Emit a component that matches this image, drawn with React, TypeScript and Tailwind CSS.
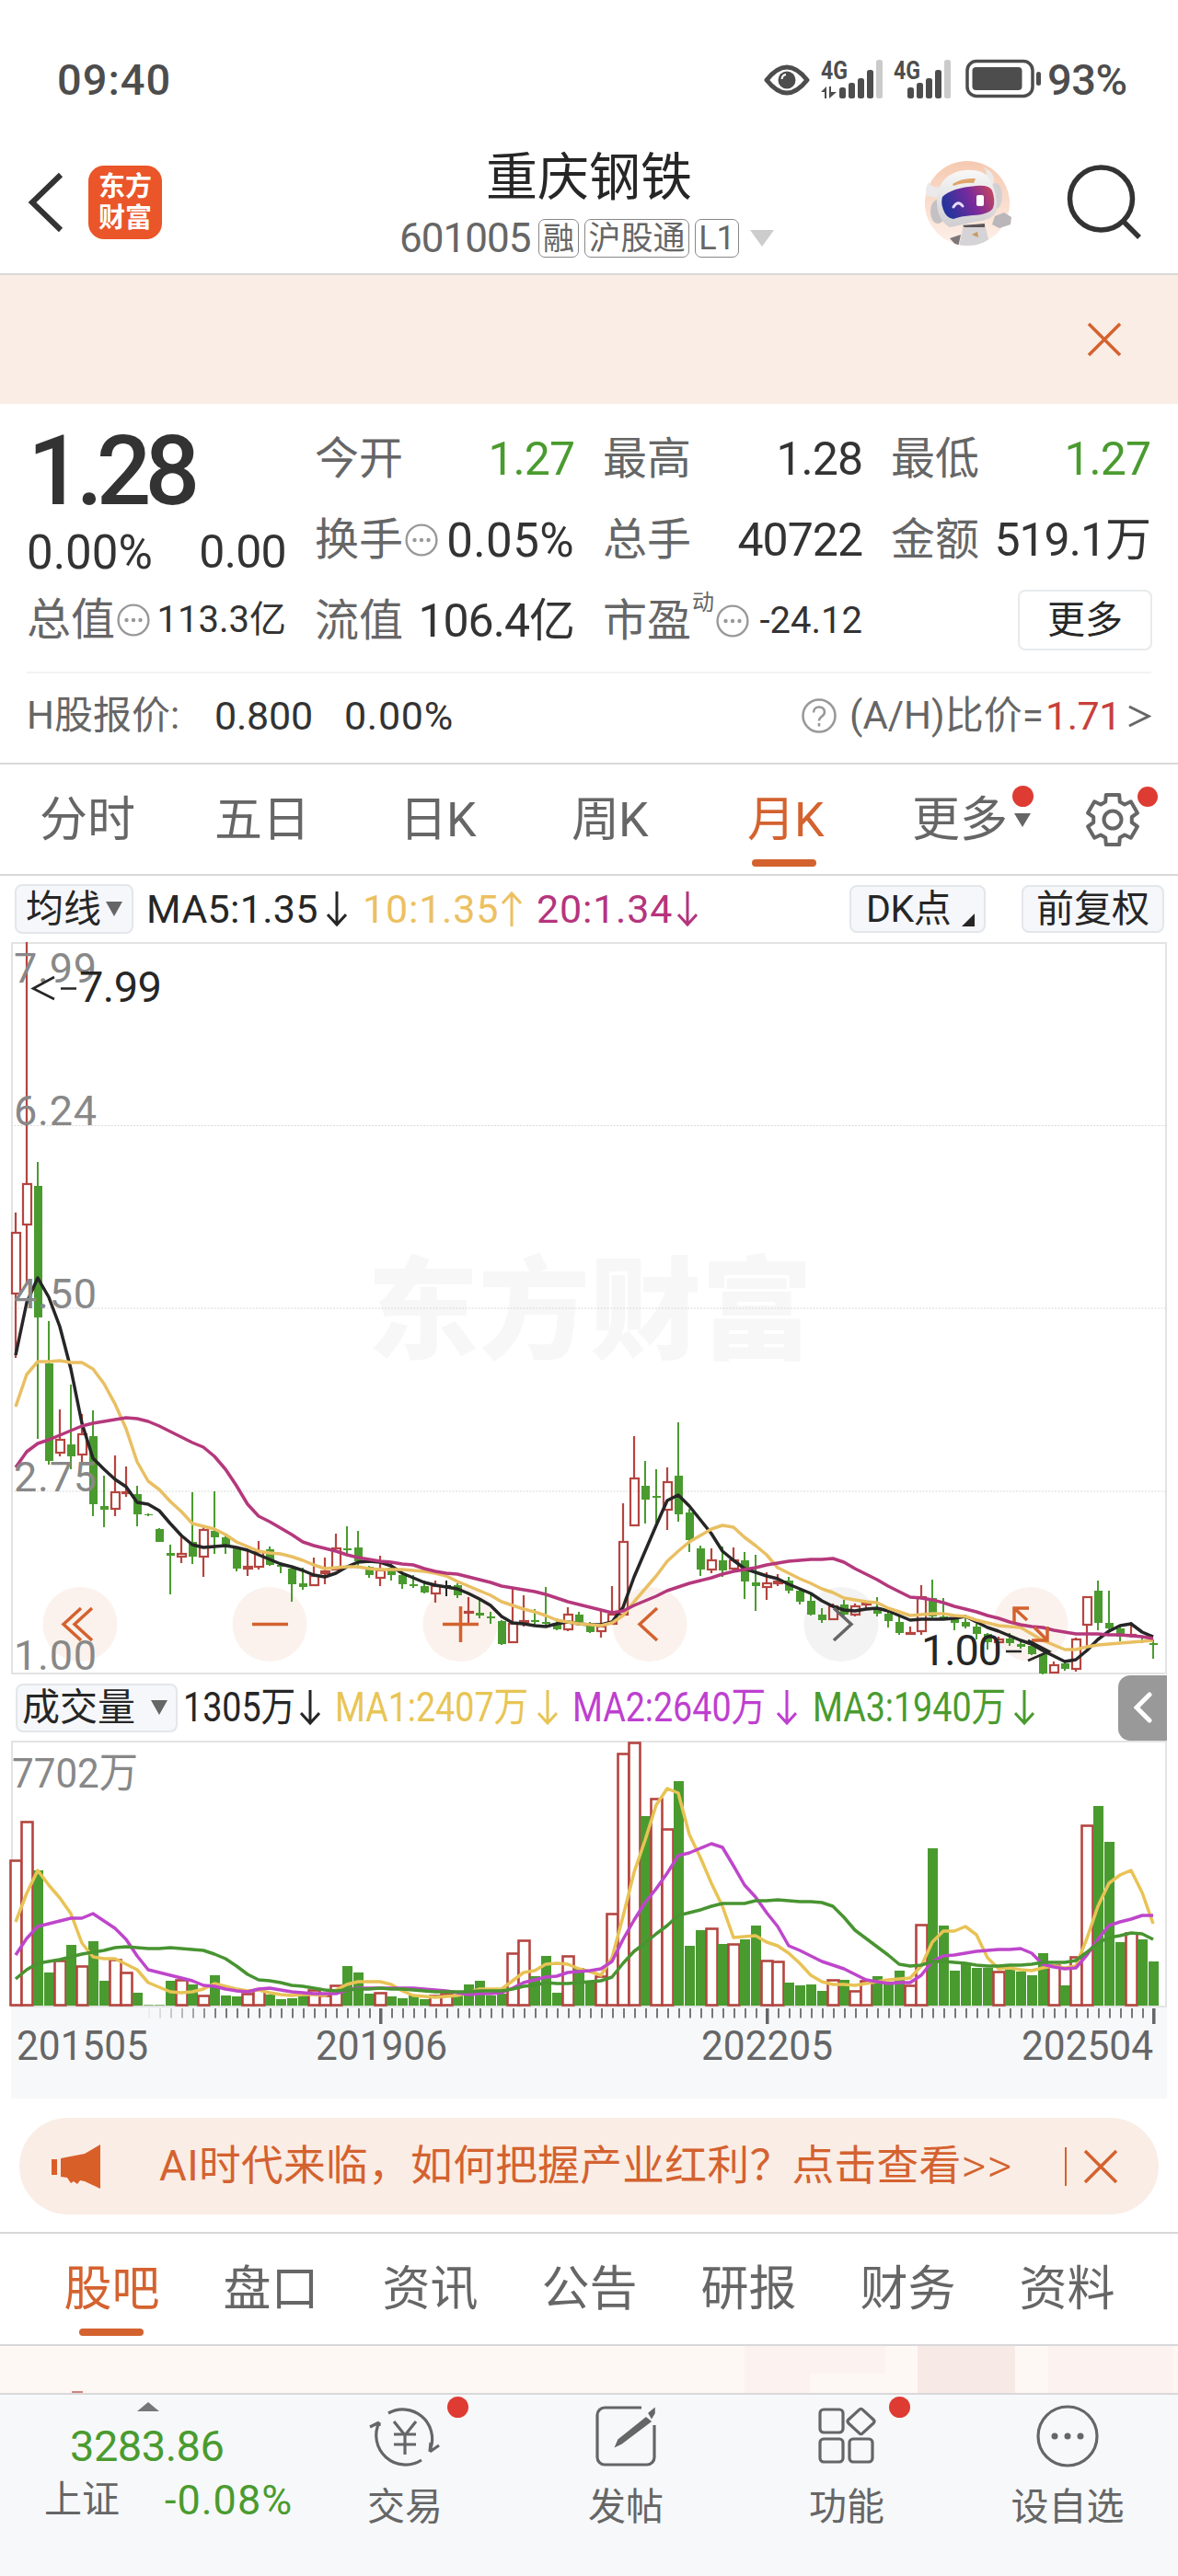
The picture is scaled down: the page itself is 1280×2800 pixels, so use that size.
import React from 'react';

const GREEN = '#4a9b2f';
const RED = '#b54540';

type Candle = [string, number, number, number, number];

// kind, high, body top, body bottom, low (chart pixel rows)
const candles: Candle[] = [
  ['r', 1318, 1339, 1407, 1476], ['r', 1024, 1286, 1332, 1396], ['g', 1263, 1289, 1432, 1564], ['g', 1436, 1482, 1588, 1592],
  ['r', 1532, 1564, 1580, 1583], ['g', 1505, 1570, 1583, 1597], ['r', 1537, 1558, 1582, 1592], ['g', 1533, 1561, 1635, 1648],
  ['g', 1604, 1637, 1641, 1660], ['r', 1582, 1621, 1641, 1648], ['r', 1594, 1621, 1624, 1627], ['g', 1615, 1624, 1646, 1659],
  ['g', 1645, 1646, 1647, 1648], ['g', 1661, 1662, 1676, 1676], ['g', 1679, 1688, 1691, 1733], ['r', 1669, 1688, 1693, 1699],
  ['g', 1622, 1676, 1692, 1700], ['r', 1660, 1662, 1693, 1714], ['g', 1621, 1664, 1671, 1689], ['g', 1668, 1671, 1681, 1689],
  ['g', 1681, 1682, 1705, 1708], ['r', 1686, 1702, 1706, 1713], ['r', 1675, 1686, 1704, 1706], ['g', 1681, 1684, 1701, 1702],
  ['g', 1698, 1701, 1703, 1710], ['g', 1704, 1705, 1722, 1741], ['g', 1704, 1721, 1725, 1728], ['r', 1693, 1712, 1724, 1724],
  ['r', 1693, 1707, 1711, 1722], ['r', 1667, 1682, 1707, 1707], ['g', 1659, 1683, 1685, 1689], ['g', 1664, 1682, 1697, 1705],
  ['g', 1702, 1703, 1712, 1715], ['r', 1691, 1706, 1716, 1724], ['g', 1699, 1704, 1712, 1718], ['g', 1711, 1712, 1722, 1727],
  ['g', 1712, 1722, 1724, 1726], ['g', 1718, 1724, 1731, 1732], ['r', 1718, 1723, 1733, 1742], ['k', 1718, 1723, 1725, 1735],
  ['g', 1721, 1723, 1734, 1737], ['r', 1736, 1751, 1754, 1764], ['g', 1737, 1753, 1756, 1759], ['g', 1752, 1757, 1759, 1765],
  ['g', 1761, 1762, 1787, 1788], ['r', 1727, 1764, 1786, 1786], ['r', 1734, 1761, 1764, 1768], ['g', 1749, 1761, 1763, 1766],
  ['g', 1725, 1763, 1765, 1767], ['g', 1759, 1764, 1771, 1772], ['r', 1747, 1754, 1772, 1773], ['g', 1752, 1755, 1763, 1766],
  ['g', 1763, 1766, 1774, 1775], ['r', 1751, 1767, 1774, 1780], ['r', 1724, 1754, 1766, 1766], ['r', 1634, 1675, 1756, 1756],
  ['r', 1561, 1606, 1659, 1659], ['g', 1588, 1615, 1630, 1656], ['g', 1597, 1626, 1628, 1655], ['r', 1595, 1610, 1642, 1663],
  ['g', 1546, 1604, 1646, 1654], ['g', 1640, 1644, 1674, 1687], ['g', 1680, 1683, 1706, 1713], ['r', 1683, 1695, 1707, 1710],
  ['g', 1681, 1696, 1707, 1714], ['r', 1682, 1695, 1706, 1707], ['g', 1687, 1696, 1719, 1738], ['g', 1690, 1720, 1724, 1751],
  ['r', 1709, 1720, 1726, 1739], ['r', 1711, 1718, 1722, 1724], ['g', 1714, 1718, 1729, 1732], ['g', 1727, 1729, 1741, 1744],
  ['g', 1733, 1740, 1755, 1756], ['g', 1748, 1755, 1761, 1764], ['r', 1743, 1745, 1761, 1761], ['g', 1739, 1744, 1755, 1756],
  ['r', 1743, 1745, 1756, 1757], ['r', 1740, 1742, 1745, 1749], ['g', 1736, 1747, 1754, 1757], ['g', 1752, 1754, 1762, 1769],
  ['g', 1757, 1763, 1775, 1777], ['r', 1768, 1774, 1776, 1777], ['r', 1723, 1735, 1774, 1777], ['g', 1717, 1737, 1757, 1758],
  ['g', 1737, 1757, 1759, 1760], ['g', 1758, 1760, 1764, 1772], ['g', 1759, 1763, 1768, 1770], ['g', 1765, 1768, 1776, 1782],
  ['g', 1775, 1776, 1785, 1793], ['r', 1779, 1781, 1786, 1787], ['g', 1775, 1781, 1786, 1789], ['g', 1783, 1787, 1790, 1792],
  ['g', 1787, 1789, 1798, 1799], ['g', 1797, 1798, 1819, 1820], ['r', 1806, 1809, 1819, 1819], ['g', 1805, 1808, 1814, 1816],
  ['r', 1780, 1781, 1815, 1817], ['r', 1735, 1735, 1767, 1790], ['g', 1718, 1729, 1764, 1772], ['g', 1729, 1764, 1770, 1771],
  ['g', 1767, 1770, 1779, 1784], ['r', 1763, 1776, 1779, 1780], ['g', 1779, 1783, 1785, 1786], ['g', 1782, 1786, 1788, 1803],
];

const ma5 = [
  1473, 1416, 1389, 1410, 1442, 1488, 1547, 1585, 1597, 1608, 1616, 1633, 1635, 1642, 1656, 1669, 1679, 1682, 1681, 1680,
  1682, 1685, 1690, 1695, 1700, 1703, 1707, 1712, 1714, 1710, 1703, 1698, 1697, 1698, 1702, 1710, 1715, 1720, 1723, 1725,
  1727, 1732, 1738, 1745, 1757, 1764, 1765, 1767, 1768, 1765, 1763, 1765, 1766, 1766, 1763, 1747, 1714, 1686, 1658, 1631,
  1625, 1637, 1652, 1667, 1686, 1696, 1705, 1709, 1713, 1716, 1722, 1727, 1732, 1740, 1746, 1750, 1751, 1749, 1748, 1751,
  1756, 1761, 1760, 1760, 1760, 1759, 1757, 1763, 1769, 1773, 1778, 1783, 1787, 1794, 1800, 1806, 1804, 1794, 1782, 1773,
  1767, 1765, 1774, 1779,
];
const ma10 = [
  1529, 1494, 1480, 1480, 1479, 1481, 1481, 1488, 1504, 1526, 1553, 1589, 1610, 1619, 1632, 1643, 1656, 1659, 1662, 1668,
  1676, 1681, 1686, 1688, 1689, 1692, 1696, 1701, 1705, 1704, 1703, 1703, 1705, 1706, 1706, 1706, 1707, 1708, 1710, 1713,
  1719, 1724, 1729, 1734, 1741, 1745, 1749, 1752, 1756, 1761, 1763, 1765, 1766, 1767, 1764, 1756, 1741, 1727, 1713, 1697,
  1686, 1676, 1669, 1662, 1658, 1660, 1671, 1680, 1690, 1704, 1710, 1716, 1721, 1727, 1731, 1737, 1739, 1741, 1742, 1748,
  1752, 1756, 1755, 1754, 1754, 1756, 1757, 1761, 1764, 1767, 1768, 1769, 1776, 1783, 1788, 1793, 1793, 1790, 1788, 1787,
  1786, 1785, 1784, 1783,
];
const ma20 = [
  1595, 1578, 1569, 1565, 1560, 1555, 1550, 1547, 1545, 1543, 1541, 1542, 1545, 1550, 1556, 1562, 1568, 1573, 1583, 1597,
  1615, 1635, 1648, 1654, 1661, 1668, 1676, 1680, 1683, 1686, 1690, 1693, 1695, 1697, 1698, 1700, 1701, 1705, 1708, 1710,
  1711, 1714, 1717, 1720, 1724, 1726, 1728, 1730, 1733, 1737, 1741, 1744, 1747, 1750, 1753, 1751, 1745, 1740, 1735, 1729,
  1725, 1721, 1718, 1715, 1711, 1708, 1706, 1704, 1701, 1699, 1697, 1696, 1695, 1695, 1694, 1698, 1705, 1711, 1717, 1724,
  1730, 1736, 1737, 1739, 1742, 1746, 1749, 1752, 1756, 1759, 1763, 1766, 1768, 1769, 1772, 1774, 1776, 1776, 1776, 1777,
  1777, 1778, 1779, 1781,
];

const volumes = [
  159, 201, 147, 36, 50, 66, 44, 70, 27, 51, 37, 14, 0.7, 0.7, 27, 29, 23, 12, 33, 11,
  10, 14, 18, 12, 7, 8, 11, 18, 12, 23, 43, 36, 13, 15, 10, 8, 11, 7, 12, 14,
  12, 23, 27, 11, 13, 58, 72, 32, 54, 14, 55, 41, 27, 33, 101, 275, 287, 206, 226, 193,
  244, 65, 82, 85, 67, 68, 72, 87, 50, 49, 25, 22, 23, 16, 29, 28, 17, 28, 32, 26,
  38, 23, 89, 171, 87, 38, 45, 41, 41, 38, 40, 37, 33, 57, 45, 22, 54, 197, 217, 178,
  69, 80, 72, 48,
];
const volUp = new Set([
  0, 1, 4, 6, 9, 10, 15, 17, 21, 22, 27, 28, 29, 33, 38, 39, 45, 46, 50, 53, 54, 55, 56, 58, 59, 63, 65, 68, 69, 74, 76, 77,
  81, 82, 89, 94, 96, 97, 101,
]);
const vma1 = [
  2089, 2058, 2033, 2049, 2063, 2080, 2112, 2127, 2129, 2129, 2135, 2141, 2155, 2160, 2165, 2166, 2165, 2162, 2156, 2159,
  2162, 2164, 2163, 2166, 2168, 2169, 2168, 2168, 2169, 2163, 2157, 2154, 2154, 2154, 2157, 2164, 2169, 2170, 2171, 2170,
  2169, 2166, 2162, 2162, 2162, 2153, 2144, 2142, 2135, 2134, 2135, 2140, 2143, 2147, 2128, 2083, 2035, 2000, 1962, 1944,
  1949, 1994, 2019, 2047, 2072, 2106, 2105, 2104, 2111, 2115, 2123, 2134, 2147, 2154, 2157, 2157, 2158, 2156, 2154, 2152,
  2151, 2150, 2137, 2111, 2099, 2099, 2094, 2103, 2128, 2140, 2139, 2141, 2142, 2139, 2137, 2139, 2137, 2107, 2072, 2047,
  2038, 2033, 2057, 2091,
];
const vma2 = [
  2125, 2107, 2094, 2091, 2088, 2085, 2085, 2080, 2088, 2096, 2108, 2126, 2141, 2144, 2147, 2150, 2153, 2158, 2159, 2162,
  2164, 2165, 2162, 2161, 2163, 2165, 2166, 2167, 2167, 2167, 2163, 2161, 2161, 2161, 2161, 2161, 2161, 2162, 2163, 2164,
  2166, 2168, 2167, 2167, 2166, 2161, 2155, 2152, 2149, 2148, 2144, 2143, 2142, 2140, 2132, 2108, 2087, 2068, 2053, 2036,
  2017, 2014, 2009, 2004, 2008, 2028, 2049, 2062, 2079, 2094, 2115, 2120, 2126, 2132, 2136, 2140, 2146, 2152, 2154, 2156,
  2155, 2155, 2147, 2132, 2126, 2125, 2123, 2121, 2120, 2119, 2119, 2118, 2123, 2135, 2138, 2140, 2139, 2125, 2108, 2093,
  2089, 2086, 2082, 2082,
];
const vma3 = [
  2151, 2141, 2134, 2132, 2130, 2127, 2124, 2122, 2120, 2117, 2116, 2117, 2118, 2118, 2117, 2118, 2119, 2120, 2124, 2129,
  2137, 2146, 2152, 2153, 2155, 2158, 2159, 2161, 2163, 2164, 2163, 2162, 2162, 2161, 2162, 2162, 2163, 2164, 2165, 2165,
  2165, 2165, 2164, 2164, 2164, 2162, 2159, 2158, 2155, 2156, 2156, 2155, 2154, 2153, 2149, 2134, 2121, 2112, 2102, 2093,
  2082, 2079, 2076, 2072, 2069, 2069, 2069, 2066, 2066, 2065, 2066, 2067, 2067, 2068, 2072, 2084, 2098, 2107, 2116, 2125,
  2135, 2137, 2136, 2132, 2132, 2133, 2134, 2136, 2137, 2137, 2136, 2136, 2135, 2133, 2133, 2133, 2131, 2122, 2112, 2106,
  2104, 2101, 2102, 2108,
];

const cx = (i: number) => 17 + 12 * i;
const line = (ys: number[]) => ys.map((y, i) => `${cx(i)},${y}`).join(' ');

function Arrow({ up = false, className = '' }: { up?: boolean; className?: string }) {
  return (
    <svg viewBox="0 0 22 40" className={`h-[40px] w-[22px] shrink-0 ${className}`} fill="none" stroke="currentColor" strokeWidth="3">
      {up ? <path d="M11 39V3M1 14 11 3l10 11" /> : <path d="M11 1v36M1 26l10 11 10-11" />}
    </svg>
  );
}

function Tri({ className = '' }: { className?: string }) {
  return (
    <svg viewBox="0 0 20 16" preserveAspectRatio="none" className={`shrink-0 ${className}`} fill="currentColor">
      <path d="M0 0h20L10 16z" />
    </svg>
  );
}

function Dots() {
  return (
    <svg viewBox="0 0 36 36" className="h-[36px] w-[36px] shrink-0" fill="none" stroke="#999" strokeWidth="2.4">
      <circle cx="18" cy="18" r="16.4" />
      <g fill="#999" stroke="none">
        <circle cx="10.5" cy="18" r="2.2" />
        <circle cx="18" cy="18" r="2.2" />
        <circle cx="25.5" cy="18" r="2.2" />
      </g>
    </svg>
  );
}

function Signal({ data = false }: { data?: boolean }) {
  return (
    <svg viewBox="0 0 68 44" className="h-[44px] w-[68px] shrink-0 overflow-visible" fill="#4d4d4d">
      <text x="0" y="21" fontSize="28" fontWeight="700" fontFamily="Roboto" textLength="29" lengthAdjust="spacingAndGlyphs">4G</text>
      {data && <path d="M0 35 6 29v13H4v-7zM9 29v13l8-7h-6v-6z" />}
      <g transform={data ? '' : 'translate(-5 0)'}>
        <rect x="20" y="30" width="7" height="12" rx="2.5" />
        <rect x="30" y="25" width="7" height="17" rx="2.5" />
        <rect x="40" y="20" width="7" height="22" rx="2.5" />
        <rect x="50" y="11" width="7" height="31" rx="2.5" />
        <rect x="60" y="0" width="7" height="42" rx="2.5" fill="#cbcbcb" />
      </g>
    </svg>
  );
}

function StatusBar() {
  return (
    <div className="flex h-[140px] items-start pl-[62px] pt-[61px] text-[#4d4d4d]">
      <div className="mt-[2px] w-[130px] text-[47px] font-medium leading-none tracking-[1px]">09:40</div>
      <svg viewBox="0 0 50 34" className="ml-[638px] mt-[9px] h-[34px] w-[50px]">
        <path d="M3 17Q14 3 25 3t22 14Q36 31 25 31T3 17z" fill="none" stroke="#4d4d4d" strokeWidth="5" strokeLinejoin="round" />
        <circle cx="25" cy="17" r="9.5" fill="#4d4d4d" />
        <path d="M19.500 16q.5-4.500 4.500-5" fill="none" stroke="#fff" strokeWidth="2" />
      </svg>
      <div className="ml-[12px] mt-[4px]"><Signal data /></div>
      <div className="ml-[11px] mt-[4px]"><Signal /></div>
      <svg viewBox="0 0 84 44" className="ml-[10px] mt-[3px] h-[44px] w-[84px]">
        <rect x="2" y="2.500" width="71" height="38" rx="10" fill="none" stroke="#4d4d4d" strokeWidth="3.500" />
        <rect x="7.500" y="9" width="54" height="25" rx="4" fill="#4d4d4d" />
        <rect x="77" y="14" width="5" height="15" rx="2.500" fill="#4d4d4d" />
      </svg>
      <div className="ml-[5px] mt-[2px] text-[47px] font-medium leading-none tracking-[-0.500px]">93%</div>
    </div>
  );
}

function Robot() {
  return (
    <svg viewBox="0 0 98 98" className="h-[98px] w-[98px]">
      <defs>
        <linearGradient id="visor" x1="0" x2="1" y1="0.3" y2="0">
          <stop offset="0" stopColor="#28349c" />
          <stop offset="0.5" stopColor="#7a2a9c" />
          <stop offset="1" stopColor="#cf4b56" />
        </linearGradient>
        <linearGradient id="halo" x1="0" x2="0" y1="0" y2="1">
          <stop offset="0" stopColor="#f6c9b0" />
          <stop offset="1" stopColor="#fdf1ea" />
        </linearGradient>
        <linearGradient id="shell" x1="0" x2="0" y1="0" y2="1">
          <stop offset="0" stopColor="#f9f8f8" />
          <stop offset="1" stopColor="#cfcdd0" />
        </linearGradient>
        <clipPath id="face"><circle cx="47" cy="48" r="46" /></clipPath>
      </defs>
      <circle cx="47" cy="48" r="46" fill="url(#halo)" />
      <g clipPath="url(#face)">
        <path d="M43 71h23l6 24H38z" fill="#d5d3d6" />
        <path d="M42 72l24-2v4H44z" fill="#5b5558" />
        <path d="M28 86l12-4-3 14z" fill="#7d7678" />
        <path d="M52 82l6-3 1 6z" fill="#c9985f" />
      </g>
      <path d="M5 25q-5 8-2 15l12 2 4-12q-10 2-14-5zM64 8q7 6 1 14l10 6q5-12-11-20z" fill="#ebe9ea" />
      <ellipse cx="15" cy="57" rx="8" ry="13" fill="#c4c1c5" />
      <ellipse cx="78" cy="40" rx="7" ry="14" fill="#d2d0d3" />
      <path d="M14 46Q14 20 38 13q26-5 34 10 8 14 7 32-3 11-23 13l-28 6Q14 66 14 46z" fill="url(#shell)" />
      <path d="M20 41q10-10 37-12 14-1 17 5 4 11 1 19-4 7-22 8-14 1-21 4-8-1-11-10-3-8-1-14z" fill="url(#visor)" />
      <path d="M31 27q10-7 25-6l-2 5q-10-1-22 3z" fill="#dfa56a" />
      <path d="M32 52q5-8 10-1" fill="none" stroke="#e7dcff" strokeWidth="3" strokeLinecap="round" />
      <rect x="57" y="39" width="8" height="12" rx="2" fill="#fff" />
      <path d="M77 62l10-4 8 5-1 8-12 4-8-4z" fill="#bab6ba" />
    </svg>
  );
}

function Header() {
  return (
    <header className="flex h-[159px] border-b-[2px] border-[#d8d8d8]">
      <svg viewBox="0 0 40 66" className="ml-[30px] mt-[47px] h-[66px] w-[40px]" fill="none" stroke="#333" strokeWidth="6">
        <path d="M36 3 5 33l31 30" />
      </svg>
      <div className="ml-[26px] mt-[40px] flex h-[80px] w-[80px] flex-col items-center justify-center gap-[3px] rounded-[17px] bg-[#ea5529] text-[29px] font-bold leading-[31px] text-white">
        <span>东方</span>
        <span>财富</span>
      </div>
      <div className="ml-[254px] mt-[24px] flex w-[420px] flex-col">
        <h1 className="ml-[98px] h-[58px] whitespace-nowrap text-[56px] leading-[58px] text-[#262626]">重庆钢铁</h1>
        <div className="mt-[16px] flex h-[42px] items-center whitespace-nowrap text-[#666]">
          <span className="ml-[4px] w-[151px] text-[44px] leading-none tracking-[-1px]">601005</span>
          <span className="flex h-[42px] w-[44px] items-center justify-center rounded-[7px] border-[1.500px] border-[#888] text-[34px] leading-none">融</span>
          <span className="ml-[6px] flex h-[42px] w-[114px] items-center justify-center rounded-[7px] border-[1.500px] border-[#888] text-[35px] leading-none">沪股通</span>
          <span className="ml-[6px] flex h-[42px] w-[48px] items-center justify-center rounded-[7px] border-[1.500px] border-[#888] text-[36px] leading-none">L1</span>
          <Tri className="ml-[12px] h-[18px] w-[26px] text-[#ccc]" />
        </div>
      </div>
      <div className="ml-[154px] mt-[33px]"><Robot /></div>
      <svg viewBox="0 0 84 84" className="ml-[57px] mt-[38px] h-[84px] w-[84px]" fill="none" stroke="#333" strokeWidth="5.500">
        <circle cx="37.500" cy="38" r="34" />
        <path d="M61 62l18 18" />
      </svg>
    </header>
  );
}

function Cross({ className = '' }: { className?: string }) {
  return (
    <svg viewBox="0 0 38 38" className={`h-[38px] w-[38px] shrink-0 ${className}`} fill="none" stroke="#d4622f" strokeWidth="3.500">
      <path d="M2 2l34 34M36 2 2 36" />
    </svg>
  );
}

const valueSize = {
  normal: 'text-[50px] tracking-[-1px]',
  percent: 'text-[51px] tracking-[0.400px]',
  small: 'text-[40px] tracking-[0px]',
};

function Cell({ label, value, color = 'text-[#333]', icon, size = 'normal', sup }: { label: string; value: string; color?: string; icon?: boolean; size?: keyof typeof valueSize; sup?: string }) {
  return (
    <div className="flex h-[60px] w-[282px] items-center whitespace-nowrap leading-none">
      <span className="w-[97px] shrink-0 text-[48px] text-[#666]">{label}</span>
      {sup && <span className="mb-[40px] w-[25px] shrink-0 text-[24px] text-[#666]">{sup}</span>}
      {icon && <span className="ml-[1px] shrink-0"><Dots /></span>}
      <span className={`ml-auto ${valueSize[size]} ${color}`}>{value}</span>
    </div>
  );
}

function Quote() {
  return (
    <section className="h-[392px] border-b-[2px] border-[#d8d8d8] px-[29px] leading-none">
      <div className="flex h-[293px] border-b-[2px] border-[#f3f3f3]">
        <div className="flex w-[282px] shrink-0 flex-col">
          <div className="ml-[1px] mt-[22px] h-[104px] whitespace-nowrap text-[105px] font-medium leading-[104px] tracking-[-7px] text-[#333]">1.28</div>
          <div className="mt-[10px] flex h-[50px] items-center justify-between text-[#333]">
            <span className="text-[51px] tracking-[0px]">0.00%</span>
            <span className="text-[50px] tracking-[-0.700px]">0.00</span>
          </div>
          <div className="mt-[19px]"><Cell label="总值" icon value="113.3亿" size="small" /></div>
        </div>
        <div className="ml-[31px] mt-[30px] grid w-[908px] shrink-0 auto-rows-[88px] grid-cols-[282px_282px_282px] gap-x-[31px]">
          <Cell label="今开" value="1.27" color="text-[#4a9b2f]" />
          <Cell label="最高" value="1.28" />
          <Cell label="最低" value="1.27" color="text-[#4a9b2f]" />
          <Cell label="换手" icon value="0.05%" size="percent" />
          <Cell label="总手" value="40722" />
          <Cell label="金额" value="519.1万" />
          <Cell label="流值" value="106.4亿" />
          <Cell label="市盈" sup="动" icon value="-24.12" size="small" />
          <div className="ml-auto mr-[-2px] mt-[-4px] flex h-[66px] w-[146px] items-center justify-center rounded-[8px] border-[2px] border-[#e8eaec] text-[41px] text-[#262626]">更多</div>
        </div>
      </div>
      <div className="flex h-[92px] items-center whitespace-nowrap text-[42px] text-[#333]">
        <span className="w-[204px] text-[#666]">H股报价:</span>
        <span className="w-[141px] text-[43px] tracking-[-0.200px]">0.800</span>
        <span className="text-[43px] tracking-[0.700px]">0.00%</span>
        <svg viewBox="0 0 40 40" className="ml-auto h-[40px] w-[40px]" fill="none" stroke="#999" strokeWidth="2.600">
          <circle cx="20" cy="20" r="17.500" />
          <path d="M14 16.500c0-8 12-8 12-.5 0 5-6 4.500-6 9.500M20 28v3.500" />
        </svg>
        <span className="ml-[13px] w-[213px] text-[42px] tracking-[0px] text-[#666]">(A/H)比价=</span>
        <span className="w-[90px] text-[43px] tracking-[-0.500px] text-[#c8403b]">1.71</span>
        <svg viewBox="0 0 26 26" className="h-[25px] w-[25px]" fill="none" stroke="#666" strokeWidth="3"><path d="M1 2l22 11L1 24" /></svg>
      </div>
    </section>
  );
}

function Gear() {
  const pts: string[] = [];
  for (let k = 0; k < 6; k++) {
    const a = (k * Math.PI) / 3 - Math.PI / 2;
    [[-0.38, 21], [-0.26, 28], [0.26, 28], [0.38, 21]].forEach(([d, r]) => {
      pts.push(`${(30 + r * Math.cos(a + d)).toFixed(1)},${(30 + r * Math.sin(a + d)).toFixed(1)}`);
    });
  }
  return (
    <svg viewBox="0 0 60 60" className="h-[60px] w-[60px]" fill="none" stroke="#666" strokeWidth="4" strokeLinejoin="round">
      <polygon points={pts.join(' ')} />
      <circle cx="30" cy="30" r="9.500" />
    </svg>
  );
}

function PeriodTabs() {
  return (
    <nav className="flex h-[121px] items-center whitespace-nowrap border-b-[2px] border-[#d8d8d8] pt-[2px] text-[52px] leading-none text-[#666]">
      <span className="ml-[43px] w-[190px]">分时</span>
      <span className="w-[201px]">五日</span>
      <span className="w-[187px] tracking-[-1px]">日K</span>
      <span className="w-[191px] tracking-[-1px]">周K</span>
      <span className="relative w-[179px] tracking-[-1px] text-[#d4622f]">
        月K
        <i className="absolute left-[5px] top-[68px] h-[8px] w-[70px] rounded-full bg-[#d4622f]" />
      </span>
      <span className="relative w-[188px]">
        更多
        <Tri className="absolute left-[111px] top-[18px] h-[15px] w-[18px]" />
        <i className="absolute left-[109px] top-[-12px] h-[23px] w-[23px] rounded-full bg-[#de3b33]" />
      </span>
      <span className="relative mt-[-2px]">
        <Gear />
        <i className="absolute left-[57px] top-[-6px] h-[22px] w-[22px] rounded-full bg-[#de3b33]" />
      </span>
    </nav>
  );
}

const chip = 'flex shrink-0 items-center rounded-[8px] border-[2px] border-[#e3e6ea] bg-[#f6f7fa] text-[#262626]';

function MaBar() {
  return (
    <div className="flex h-[72px] items-center whitespace-nowrap text-[43px] leading-none">
      <div className={`${chip} ml-[16px] h-[54px] w-[129px] pl-[10px] text-[41px]`}>
        <span>均线</span>
        <Tri className="ml-[5px] h-[16px] w-[18px] text-[#666]" />
      </div>
      <div className="ml-[14px] flex w-[235px] items-center text-[#262626]">
        <span className="w-[196px] tracking-[0.300px]">MA5:1.35</span>
        <Arrow />
      </div>
      <div className="flex w-[189px] items-center text-[#ecc061]">
        <span className="w-[151px] tracking-[0.800px]">10:1.35</span>
        <Arrow up />
      </div>
      <div className="flex w-[175px] items-center text-[#b5347d]">
        <span className="w-[153px] tracking-[0.800px]">20:1.34</span>
        <Arrow />
      </div>
      <div className={`${chip} ml-auto h-[52px] w-[148px] pl-[16px] text-[41px]`}>
        <span className="tracking-[-0.500px]">DK点</span>
        <svg viewBox="0 0 14 14" className="ml-[12px] mt-[24px] h-[14px] w-[14px]"><path d="M14 0v14H0z" fill="#262626" /></svg>
      </div>
      <div className={`${chip} ml-[39px] mr-[15px] h-[52px] w-[155px] justify-center text-[41px]`}>前复权</div>
    </div>
  );
}

const labelFont = { fontFamily: 'Roboto, "Noto Sans CJK SC", sans-serif' };

function KChart() {
  return (
    <svg viewBox="0 1024 1280 796" className="block h-[796px] w-full overflow-visible" {...labelFont}>
      <rect x="13" y="1025" width="1254" height="794" fill="#fff" stroke="#e3e3e3" strokeWidth="2" />
      <text x="399" y="1467" fontSize="121" fontWeight="900" fill="#f7f7f7" textLength="484">东方财富</text>
      {[1223.5, 1422, 1621].map((y) => (
        <line key={y} x1="12" x2="1267" y1={y} y2={y} stroke="#d9d9d9" strokeWidth="1" strokeDasharray="2 1.5" />
      ))}
      {[[87, '#fbf2ed'], [293, '#fbf2ed'], [500, '#fbf2ed'], [706, '#fbf2ed'], [914, '#f3f3f3'], [1120, '#fbf2ed']].map(([x, f]) => (
        <circle key={x} cx={x} cy="1765.500" r="40.500" fill={f as string} />
      ))}
      {candles.map(([k, hi, top, bot, lo], i) => {
        const x = cx(i);
        if (k === 'r')
          return (
            <g key={i} stroke={RED} strokeWidth="2.200" fill="none">
              <path d={`M${x} ${hi}V${top}M${x} ${bot}V${lo}`} />
              <rect x={x - 4} y={top + 1} width="9" height={Math.max(bot - top - 2, 1)} />
            </g>
          );
        const c = k === 'g' ? GREEN : '#262626';
        return (
          <g key={i} fill={c}>
            <rect x={x - 1} y={hi} width="2" height={lo - hi} />
            <rect x={x - 4} y={top} width="9" height={Math.max(bot - top, 1)} />
          </g>
        );
      })}
      <g fill="none" strokeWidth="3.500" strokeLinejoin="round">
        <polyline points={line(ma5)} stroke="#262626" />
        <polyline points={line(ma10)} stroke="#e9bf62" />
        <polyline points={line(ma20)} stroke="#b5387c" />
      </g>
      <g fill="none" stroke="#d4622f" strokeWidth="3.500">
        <path d="M88 1748 69 1765.500l19 17.500M100 1748l-19 17.500 19 17.500" />
        <path d="M274 1765.500h39M481 1765.500h39M500.500 1746v39" />
        <path d="M714 1748l-19 17.500 19 17.500" />
        <path d="M1116 1761l-14-13M1102 1763v-15h16M1124 1769l13 13M1121 1783h17v-15" />
        <path d="M906 1748l19 17.500-19 17.500" stroke="#666" />
      </g>
      <g fontSize="45" fill="#888">
        <text x="15" y="1068" textLength="90">7.99</text>
        <text x="15" y="1223" textLength="90">6.24</text>
        <text x="15" y="1422" textLength="90">4.50</text>
        <text x="15" y="1621" textLength="90">2.75</text>
        <text x="15" y="1815" textLength="90">1.00</text>
      </g>
      <g fill="#262626" fontSize="47">
        <text x="86" y="1089" textLength="90">7.99</text>
        <text x="1001" y="1810" textLength="88">1.00</text>
        <path d="M59 1062l-23 12.500 23 11.500M66 1074.500h17M1117 1783l23 12-23 10M1093 1795h17" fill="none" stroke="#262626" strokeWidth="2.600" />
      </g>
    </svg>
  );
}

function VolText({ children }: { children: React.ReactNode }) {
  return <span className="inline-block origin-left scale-x-[0.855] text-[44px]">{children}</span>;
}

function VolBar() {
  return (
    <div className="flex h-[72px] items-center whitespace-nowrap leading-none">
      <div className={`${chip} ml-[17px] h-[53px] w-[176px] pl-[5px] text-[41px]`}>
        <span>成交量</span>
        <Tri className="ml-[17px] h-[16px] w-[18px] text-[#666]" />
      </div>
      <div className="ml-[6px] flex w-[165px] items-center text-[#262626]">
        <span className="w-[127px]"><VolText>1305万</VolText></span>
        <Arrow />
      </div>
      <div className="flex w-[258px] items-center text-[#e8c554]">
        <span className="w-[220px]"><VolText>MA1:2407万</VolText></span>
        <Arrow />
      </div>
      <div className="flex w-[261px] items-center text-[#be3fd0]">
        <span className="w-[222px]"><VolText>MA2:2640万</VolText></span>
        <Arrow />
      </div>
      <div className="flex items-center text-[#4a9b2f]">
        <span className="w-[219px]"><VolText>MA3:1940万</VolText></span>
        <Arrow />
      </div>
      <div className="ml-auto mr-[12px] flex h-[71px] w-[53px] items-center justify-center rounded-l-[13px] bg-[#999]">
        <svg viewBox="0 0 20 34" className="h-[34px] w-[20px]" fill="none" stroke="#fff" strokeWidth="5" strokeLinecap="round"><path d="M17 3 3 17l14 14" /></svg>
      </div>
    </div>
  );
}

function VolChart() {
  return (
    <svg viewBox="0 1892 1280 389" className="block h-[389px] w-full" {...labelFont}>
      <defs>
        <linearGradient id="tickFade" gradientUnits="userSpaceOnUse" x1="155" x2="240" y1="0" y2="0">
          <stop offset="0" stopColor="#777" stopOpacity="0" />
          <stop offset="1" stopColor="#777" />
        </linearGradient>
      </defs>
      <rect x="12" y="2180" width="1256" height="101" fill="#f7f8fa" />
      <rect x="13" y="1893" width="1254" height="288" fill="#fff" stroke="#e3e3e3" strokeWidth="2" />
      {volumes.map((h, i) =>
        volUp.has(i) ? (
          <rect key={i} x={cx(i) - 5.5} y={2181.5 - h} width="12" height={h - 2} fill="#fff" stroke={RED} strokeWidth="2.600" />
        ) : (
          <rect key={i} x={cx(i) - 5} y={2180 - h} width="11" height={h} fill={GREEN} />
        ),
      )}
      <g fill="none" strokeWidth="3.500" strokeLinejoin="round">
        <polyline points={line(vma1)} stroke="#e8c355" />
        <polyline points={line(vma2)} stroke="#be46cb" />
        <polyline points={line(vma3)} stroke="#489431" />
      </g>
      {volumes.map((_, i) =>
        i < 12 ? null : i === 33 || i === 68 || i === 103 ? (
          <rect key={i} x={cx(i) - 1} y="2183" width="3.500" height="17" fill="#666" />
        ) : (
          <rect key={i} x={cx(i)} y="2183" width="2" height="10.500" fill="url(#tickFade)" />
        ),
      )}
      <text x="13" y="1943" fontSize="45" fill="#888" textLength="137" lengthAdjust="spacingAndGlyphs">7702万</text>
      <g fontSize="45" fill="#666">
        <text x="18" y="2239" textLength="143" lengthAdjust="spacingAndGlyphs">201505</text>
        <text x="343" y="2239" textLength="143" lengthAdjust="spacingAndGlyphs">201906</text>
        <text x="762" y="2239" textLength="143" lengthAdjust="spacingAndGlyphs">202205</text>
        <text x="1110" y="2239" textLength="143" lengthAdjust="spacingAndGlyphs">202504</text>
      </g>
    </svg>
  );
}

function Promo() {
  return (
    <div className="mx-[21px] mt-[21px] flex h-[105px] items-center whitespace-nowrap rounded-full bg-[#faede5] text-[#d4622f]">
      <svg viewBox="0 0 54 48" className="ml-[35px] h-[48px] w-[54px]" fill="#d95f28">
        <path d="M0 16h6v17H0zM10 15l26-5L53 0v48l-17-8-5-1-3 4-4-3-3 2-4-6-7-1z" />
      </svg>
      <span className="ml-[63px] flex w-[984px] items-center text-[45.700px] leading-none tracking-[0.350px]">
        AI时代来临，如何把握产业红利？点击查看
        <span className="text-[52px] font-light tracking-[1px]">&gt;&gt;</span>
      </span>
      <i className="h-[42px] w-[1.500px] bg-[#d4622f]" />
      <Cross className="ml-[18px]" />
    </div>
  );
}

function InfoTabs() {
  const tabs = ['股吧', '盘口', '资讯', '公告', '研报', '财务', '资料'];
  return (
    <nav className="mt-[19px] flex h-[124px] items-center border-y-[2px] border-[#d8d8da] pl-[35px] pt-[2px] text-[52px] leading-none text-[#666]">
      {tabs.map((t, i) => (
        <span key={t} className={`relative flex w-[173px] justify-center ${i === 0 ? 'text-[#d4622f]' : ''}`}>
          {t}
          {i === 0 && <i className="absolute left-[51px] top-[68px] h-[8px] w-[70px] rounded-full bg-[#d4622f]" />}
        </span>
      ))}
    </nav>
  );
}

function Strip() {
  return (
    <div className="flex h-[51px] items-start overflow-hidden bg-[#fef8f5]">
      <i className="ml-[78px] mt-[49px] h-[2px] w-[12px] bg-[#cf8680]" />
      <i className="ml-[719px] h-full w-[71px] bg-[#fcf2ef]" />
      <i className="h-[30px] w-[82px] bg-[#fcf2ef]" />
      <i className="ml-[35px] h-full w-[106px] bg-[#f7e9e6]" />
      <i className="ml-[36px] h-full w-[136px] bg-[#fcf2ef]" />
    </div>
  );
}

function NavItem({ label, dot = false, children }: { label: string; dot?: boolean; children: React.ReactNode }) {
  return (
    <div className="relative flex w-[240px] flex-col items-center">
      <svg viewBox="0 0 80 80" className="mt-[5px] h-[80px] w-[80px]" fill="none" stroke="#666" strokeWidth="3.200">{children}</svg>
      {dot && <i className="absolute left-[166px] top-[2px] h-[23px] w-[23px] rounded-full bg-[#de3b33]" />}
      <span className="mt-[17px] text-[41px] leading-none text-[#666]">{label}</span>
    </div>
  );
}

function BottomNav() {
  return (
    <footer className="flex h-[200px] border-t-[2px] border-[#d8d8da] bg-[#f6f8fa]">
      <div className="flex w-[320px] flex-col whitespace-nowrap leading-none">
        <svg viewBox="0 0 24 10" className="ml-[149px] mt-[8px] h-[10px] w-[24px]"><path d="M0 10 12 0l12 10z" fill="#777" /></svg>
        <span className="ml-[76px] mt-[14px] text-[47px] tracking-[-0.500px] text-[#4a9b2f]">3283.86</span>
        <div className="mt-[13px] flex items-center">
          <span className="ml-[48px] w-[131px] text-[41px] text-[#666]">上证</span>
          <span className="text-[45px] tracking-[1px] text-[#4a9b2f]">-0.08%</span>
        </div>
      </div>
      <NavItem label="交易" dot>
        <path d="M22 15a32 32 0 0 1 46 38l-1 3M67 57l1-10M67 57l10-7M58 66A32 32 0 0 1 12 25M12 25l-10 5M12 25v4M28 24l12 15 12-15M28 38h24M28 49h24M40 38v22" />
      </NavItem>
      <NavItem label="发帖">
        <path d="M57 9H17a8 8 0 0 0-8 8v46a8 8 0 0 0 8 8h46a8 8 0 0 0 8-8V28" />
        <path d="M62 20l5 4-32 24-6 3 3-7zM65 15l6-5v5l-3 5z" fill="#666" strokeWidth="1.500" />
      </NavItem>
      <NavItem label="功能" dot>
        <rect x="11" y="11" width="25" height="25" rx="4" />
        <rect x="11" y="43" width="25" height="25" rx="4" />
        <rect x="43" y="43" width="25" height="25" rx="4" />
        <path d="M53.500 11.500q2-2.500 4 0L69 22q2 2 0 4L57.500 36.500q-2 2.500-4 0L42 26q-2-2 0-4z" />
      </NavItem>
      <NavItem label="设自选">
        <circle cx="40" cy="40" r="32" />
        <g fill="#666" stroke="none">
          <circle cx="26" cy="40" r="3.500" />
          <circle cx="40" cy="40" r="3.500" />
          <circle cx="54" cy="40" r="3.500" />
        </g>
      </NavItem>
    </footer>
  );
}

export default function App() {
  return (
    <main className="h-[2800px] w-[1280px] overflow-hidden bg-white font-[Roboto,'Noto_Sans_CJK_SC',sans-serif]">
      <StatusBar />
      <Header />
      <div className="flex h-[140px] items-center justify-end bg-[#faede5] pr-[61px]">
        <Cross />
      </div>
      <Quote />
      <PeriodTabs />
      <MaBar />
      <KChart />
      <VolBar />
      <VolChart />
      <Promo />
      <InfoTabs />
      <Strip />
      <BottomNav />
    </main>
  );
}
